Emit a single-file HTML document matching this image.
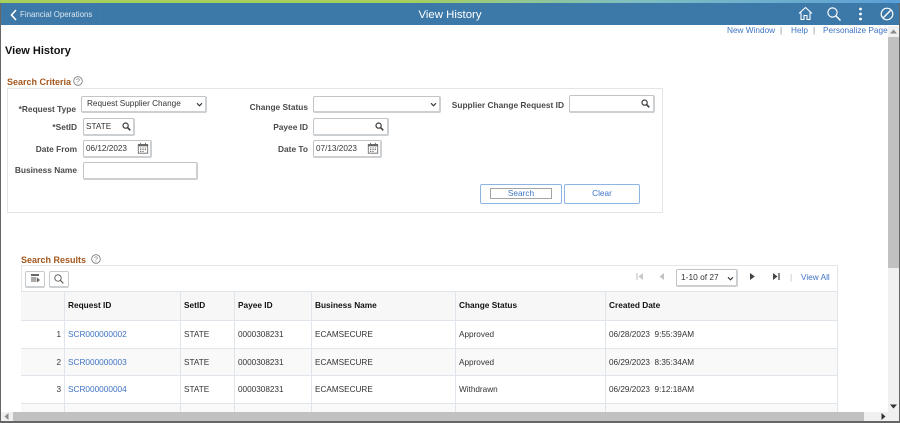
<!DOCTYPE html>
<html><head><meta charset="utf-8"><style>
html,body{margin:0;padding:0;background:#fff}
#p{position:relative;width:900px;height:423px;overflow:hidden;background:#fff;font-family:"Liberation Sans",sans-serif;font-size:8.2px;color:#333;filter:blur(.3px)}
#p div,#p a,#p svg{position:absolute}
.t{white-space:nowrap;line-height:12px}
.l{font-weight:bold;font-size:8.35px;color:#4a4a4a;text-align:right;white-space:nowrap;line-height:12px}
.a{color:#3f74c4;font-size:8.25px;white-space:nowrap;line-height:12px}
.i{background:#fff;border:1px solid #c2c5c8;border-bottom:2px solid #cdd0d2;border-right:2px solid #cdd0d2;border-radius:2px;box-sizing:border-box;line-height:16px;padding-left:2px;white-space:nowrap;color:#333}
.h{font-weight:bold;font-size:8.3px;color:#111;white-space:nowrap;line-height:12px}
.ln{background:#dfe5ea}
.sec{font-weight:bold;color:#a4561c;font-size:9px;white-space:nowrap;line-height:12px}
</style></head><body><div id="p">
<svg width="0" height="0" style="position:absolute"><defs>
<symbol id="mag" viewBox="0 0 10 10"><circle cx="4" cy="4" r="2.9" fill="none" stroke="#3a3a3a" stroke-width="1.3"/><path d="M6 6L9.2 9.2" stroke="#3a3a3a" stroke-width="1.7"/></symbol>
<symbol id="magl" viewBox="0 0 10 10"><circle cx="4" cy="4" r="3.2" fill="none" stroke="#555" stroke-width=".9"/><path d="M6.3 6.3L9.4 9.4" stroke="#555" stroke-width="1.1"/></symbol>
<symbol id="cal" viewBox="0 0 14 14"><path d="M1.5 3h11v10h-11z" fill="#fff" stroke="#666" stroke-width="1"/><path d="M1.5 2.5h11v2.5h-11z" fill="#666"/><path d="M4 1v3M10 1v3" stroke="#666"/><path d="M3.5 7h1.5M6.3 7h1.5M9 7h1.5M3.5 9h1.5M6.3 9h1.5M9 9h1.5M3.5 11h1.5M6.3 11h1.5" stroke="#555"/></symbol>
<symbol id="q" viewBox="0 0 10 10"><circle cx="5" cy="5" r="4.3" fill="none" stroke="#777" stroke-width=".8"/><text x="5" y="7.6" font-size="7" text-anchor="middle" fill="#777" font-family="Liberation Sans">?</text></symbol>
<symbol id="chev" viewBox="0 0 8 6"><path d="M1 1.5L4 4.5L7 1.5" fill="none" stroke="#333" stroke-width="1.4"/></symbol>
</defs></svg>

<!-- header -->
<div style="left:0;top:0;width:900px;height:3px;background:linear-gradient(90deg,#a6cf5c 0%,#a6cf5c 45%,#7fbfc0 70%,#5b9fd8 100%)"></div>
<div style="left:0;top:3px;width:900px;height:22px;background:#3c78a8"></div>
<div style="left:1px;top:3px;width:100px;height:21px;border:1px solid #4479a6;box-sizing:border-box"></div>
<svg style="left:10px;top:9px" width="7" height="12" viewBox="0 0 7 12"><path d="M6 1L1.5 6L6 11" fill="none" stroke="#fff" stroke-width="1.6"/></svg>
<div class="t" style="left:20px;top:9px;color:#dde7ef;font-size:7.9px">Financial Operations</div>
<div class="t" style="left:350px;width:200px;text-align:center;top:8px;color:#fff;font-size:11.4px;line-height:14px">View History</div>
<svg style="left:798px;top:6px" width="15" height="15" viewBox="0 0 15 15"><path d="M1 7.5L7.5 1.5L14 7.5M3 6.5V13.5H6V9.5H9V13.5H12V6.5" fill="none" stroke="#fff" stroke-width="1.1"/></svg>
<svg style="left:827px;top:7px" width="14" height="14" viewBox="0 0 14 14"><circle cx="5.5" cy="5.5" r="4.6" fill="none" stroke="#fff" stroke-width="1.2"/><path d="M9 9L13.5 13.5" stroke="#fff" stroke-width="1.4"/></svg>
<svg style="left:858px;top:7px" width="5" height="14" viewBox="0 0 5 14"><circle cx="2.5" cy="2" r="1.4" fill="#fff"/><circle cx="2.5" cy="7" r="1.4" fill="#fff"/><circle cx="2.5" cy="12" r="1.4" fill="#fff"/></svg>
<svg style="left:880px;top:7px" width="14" height="14" viewBox="0 0 14 14"><circle cx="7" cy="7" r="5.8" fill="none" stroke="#fff" stroke-width="1.2"/><path d="M3.5 10.5L10.5 3.5" stroke="#fff" stroke-width="1.4"/></svg>

<!-- top links -->
<div class="a" style="left:727px;top:25px">New Window</div>
<div class="t" style="left:780px;top:25px;color:#888">|</div>
<div class="a" style="left:791px;top:25px">Help</div>
<div class="t" style="left:813px;top:25px;color:#888">|</div>
<div class="a" style="left:823px;top:25px">Personalize Page</div>

<div class="t" style="left:5px;top:44px;font-weight:bold;font-size:11px;color:#111;line-height:14px">View History</div>

<!-- Search criteria -->
<div class="sec" style="left:7px;top:76px">Search Criteria</div>
<svg style="left:73px;top:76px" width="10" height="10"><use href="#q"/></svg>
<div style="left:7px;top:88px;width:656px;height:125px;border:1px solid #e3e5e7;box-sizing:border-box"></div>

<div class="l" style="left:0;width:76px;top:103px">*Request Type</div>
<div class="i" style="left:81px;top:96px;width:126px;height:17px;padding-left:5px;line-height:14px">Request Supplier Change</div>
<svg style="left:196px;top:102px" width="7" height="5"><use href="#chev"/></svg>
<div class="l" style="left:0;width:77px;top:121px">*SetID</div>
<div class="i" style="left:83px;top:118px;width:52px;height:18px">STATE</div>
<svg style="left:122px;top:122px" width="9" height="9"><use href="#mag"/></svg>
<div class="l" style="left:0;width:77px;top:143px">Date From</div>
<div class="i" style="left:83px;top:140px;width:69px;height:18px">06/12/2023</div>
<svg style="left:137px;top:142px" width="12" height="12"><use href="#cal"/></svg>
<div class="l" style="left:0;width:77px;top:164px">Business Name</div>
<div class="i" style="left:83px;top:162px;width:115px;height:18px"></div>

<div class="l" style="left:200px;width:108px;top:101px">Change Status</div>
<div class="i" style="left:313px;top:96px;width:128px;height:17px"></div>
<svg style="left:430px;top:102px" width="7" height="5"><use href="#chev"/></svg>
<div class="l" style="left:200px;width:108px;top:121px">Payee ID</div>
<div class="i" style="left:313px;top:118px;width:76px;height:18px"></div>
<svg style="left:375px;top:122px" width="9" height="9"><use href="#mag"/></svg>
<div class="l" style="left:200px;width:108px;top:143px">Date To</div>
<div class="i" style="left:313px;top:140px;width:69px;height:18px">07/13/2023</div>
<svg style="left:367px;top:142px" width="12" height="12"><use href="#cal"/></svg>

<div class="l" style="left:430px;width:134px;top:99px">Supplier Change Request ID</div>
<div class="i" style="left:569px;top:95px;width:86px;height:18px"></div>
<svg style="left:641px;top:99px" width="9" height="9"><use href="#mag"/></svg>

<div style="left:480px;top:184px;width:82px;height:20px;border:1px solid #8eb4e3;border-radius:2px;box-sizing:border-box"></div>
<div class="a" style="left:490px;top:188px;width:62px;height:11px;line-height:9px;border:1px solid #a5a5a5;box-sizing:border-box;text-align:center">Search</div>
<div class="a" style="left:564px;top:184px;width:76px;height:20px;line-height:18px;border:1px solid #8eb4e3;border-radius:2px;box-sizing:border-box;text-align:center">Clear</div>

<!-- Search Results -->
<div class="sec" style="left:21px;top:254px">Search Results</div>
<svg style="left:91px;top:254px" width="10" height="10"><use href="#q"/></svg>
<div style="left:21px;top:265px;width:817px;height:26px;border:1px solid #e3e5e7;border-bottom:0;box-sizing:border-box"></div>
<div style="left:25px;top:271px;width:20px;height:17px;border:1px solid #c8cbcd;border-bottom:2px solid #cdd0d2;border-radius:2px;box-sizing:border-box"></div>
<svg style="left:31px;top:274px" width="9" height="9" viewBox="0 0 9 9"><path d="M0 0h8v2H0z" fill="#666"/><path d="M0 3h5.5v5H0z" fill="#aaa"/><path d="M6 3.5l3 2.5L6 8.5z" fill="#666"/></svg>
<div style="left:49px;top:271px;width:20px;height:17px;border:1px solid #c8cbcd;border-bottom:2px solid #cdd0d2;border-radius:2px;box-sizing:border-box"></div>
<svg style="left:54px;top:274px" width="10" height="10"><use href="#magl"/></svg>

<svg style="left:636px;top:272px" width="8" height="9" viewBox="0 0 8 9"><path d="M1 1v7" stroke="#c8c8c8" stroke-width="1.2"/><path d="M7 1v7L2.5 4.5z" fill="#c8c8c8"/></svg>
<svg style="left:658px;top:272px" width="7" height="9" viewBox="0 0 7 9"><path d="M6 1v7L1.5 4.5z" fill="#c4c4c4"/></svg>
<div class="i" style="left:676px;top:269px;width:62px;height:18px;padding-left:4px;font-size:8.4px;color:#333;line-height:15px">1-10 of 27</div>
<svg style="left:727px;top:276px" width="7" height="5"><use href="#chev"/></svg>
<svg style="left:749px;top:272px" width="7" height="9" viewBox="0 0 7 9"><path d="M1 1v7L5.8 4.5z" fill="#444"/></svg>
<svg style="left:772px;top:272px" width="8" height="9" viewBox="0 0 8 9"><path d="M1 1v7L5.5 4.5z" fill="#444"/><path d="M7 1v7" stroke="#444" stroke-width="1.2"/></svg>
<div class="t" style="left:790px;top:272px;color:#bbb">|</div>
<div class="a" style="left:801px;top:272px">View All</div>

<!-- table -->
<div style="left:21px;top:291px;width:817px;height:29px;background:#f7f7f7"></div>
<div style="left:21px;top:348px;width:817px;height:27px;background:#f9f9f9"></div>
<div style="left:21px;top:403px;width:817px;height:9px;background:#f9f9f9"></div>
<div class="ln" style="left:21px;top:291px;width:817px;height:1px"></div>
<div class="ln" style="left:21px;top:320px;width:817px;height:1px"></div>
<div class="ln" style="left:21px;top:348px;width:817px;height:1px"></div>
<div class="ln" style="left:21px;top:375px;width:817px;height:1px"></div>
<div class="ln" style="left:21px;top:403px;width:817px;height:1px"></div>
<div class="ln" style="left:64px;top:291px;width:1px;height:121px"></div>
<div class="ln" style="left:180px;top:291px;width:1px;height:121px"></div>
<div class="ln" style="left:234px;top:291px;width:1px;height:121px"></div>
<div class="ln" style="left:311px;top:291px;width:1px;height:121px"></div>
<div class="ln" style="left:455px;top:291px;width:1px;height:121px"></div>
<div class="ln" style="left:605px;top:291px;width:1px;height:121px"></div>
<div class="ln" style="left:837px;top:291px;width:1px;height:121px"></div>

<div class="h" style="left:68px;top:299px">Request ID</div>
<div class="h" style="left:184px;top:299px">SetID</div>
<div class="h" style="left:238px;top:299px">Payee ID</div>
<div class="h" style="left:315px;top:299px">Business Name</div>
<div class="h" style="left:459px;top:299px">Change Status</div>
<div class="h" style="left:609px;top:299px">Created Date</div>

<div class="t" style="left:40px;width:21px;text-align:right;top:329px">1</div>
<div class="a" style="left:68px;top:329px">SCR000000002</div>
<div class="t" style="left:184px;top:329px">STATE</div>
<div class="t" style="left:238px;top:329px">0000308231</div>
<div class="t" style="left:315px;top:329px">ECAMSECURE</div>
<div class="t" style="left:459px;top:329px">Approved</div>
<div class="t" style="left:609px;top:329px;white-space:pre">06/28/2023  9:55:39AM</div>

<div class="t" style="left:40px;width:21px;text-align:right;top:357px">2</div>
<div class="a" style="left:68px;top:357px">SCR000000003</div>
<div class="t" style="left:184px;top:357px">STATE</div>
<div class="t" style="left:238px;top:357px">0000308231</div>
<div class="t" style="left:315px;top:357px">ECAMSECURE</div>
<div class="t" style="left:459px;top:357px">Approved</div>
<div class="t" style="left:609px;top:357px;white-space:pre">06/29/2023  8:35:34AM</div>

<div class="t" style="left:40px;width:21px;text-align:right;top:384px">3</div>
<div class="a" style="left:68px;top:384px">SCR000000004</div>
<div class="t" style="left:184px;top:384px">STATE</div>
<div class="t" style="left:238px;top:384px">0000308231</div>
<div class="t" style="left:315px;top:384px">ECAMSECURE</div>
<div class="t" style="left:459px;top:384px">Withdrawn</div>
<div class="t" style="left:609px;top:384px;white-space:pre">06/29/2023  9:12:18AM</div>

<!-- scrollbars -->
<div style="left:888px;top:26px;width:11px;height:386px;background:#f0f0f0"></div>
<div style="left:888px;top:37px;width:11px;height:231px;background:#c1c1c1"></div>
<svg style="left:890px;top:29px" width="7" height="5"><path d="M3.5 0.5L7 4.5H0z" fill="#8a8a8a"/></svg>
<svg style="left:890px;top:404px" width="7" height="5"><path d="M3.5 4.5L7 0.5H0z" fill="#333"/></svg>
<div style="left:1px;top:412px;width:898px;height:9px;background:#f0f0f0"></div>
<div style="left:13px;top:412px;width:851px;height:9px;background:#c1c1c1"></div>
<svg style="left:4px;top:413px" width="5" height="7"><path d="M0.5 3.5L4.5 0V7z" fill="#8a8a8a"/></svg>
<svg style="left:881px;top:413px" width="5" height="7"><path d="M4.5 3.5L0.5 0V7z" fill="#333"/></svg>

<!-- outer frame -->
<div style="left:0;top:3px;width:1px;height:420px;background:#666"></div>
<div style="left:899px;top:3px;width:1px;height:420px;background:#666"></div>
<div style="left:0;top:421px;width:900px;height:2px;background:#666"></div>
</div></body></html>
